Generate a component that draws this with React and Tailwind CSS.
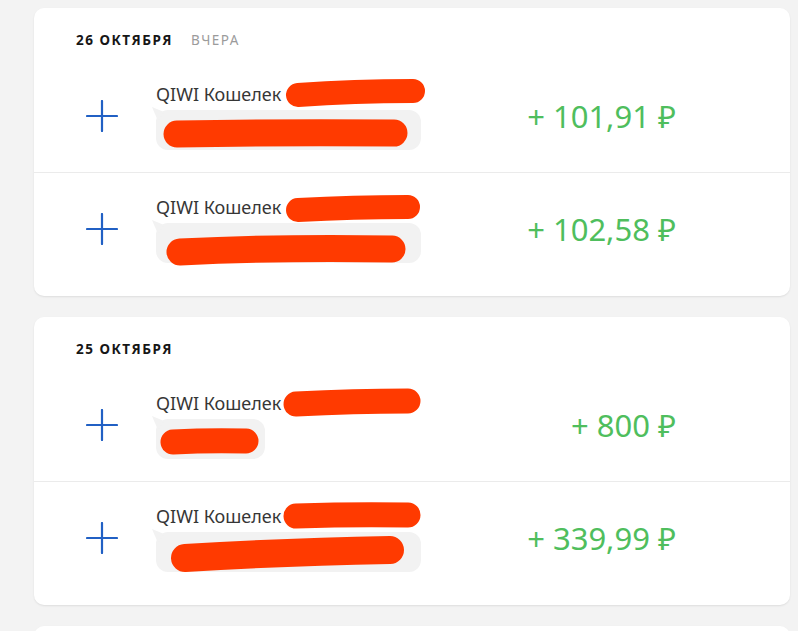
const rows1 = [
  {
    amount: '+ 101,91 ₽',
    bubbleW: 'w-[265px]',
    marks: [
      { d: 'M264 35 Q320 31 379 31', w: 24 },
      { d: 'M143 74 Q250 72 360 73', w: 27 },
    ],
  },
  {
    amount: '+ 102,58 ₽',
    bubbleW: 'w-[265px]',
    marks: [
      { d: 'M264 37 Q320 34 374 34', w: 24 },
      { d: 'M146 79 Q250 74 358 76', w: 27 },
    ],
  },
];

const rows2 = [
  {
    amount: '+ 800 ₽',
    bubbleW: 'w-[109px]',
    marks: [
      { d: 'M262 35 Q320 32 374 32', w: 25 },
      { d: 'M139 73 Q175 71 212 72', w: 25 },
    ],
  },
  {
    amount: '+ 339,99 ₽',
    bubbleW: 'w-[265px]',
    marks: [
      { d: 'M262 34 Q320 32 374 33', w: 25 },
      { d: 'M151 76 Q250 70 356 68', w: 28 },
    ],
  },
];

function PlusIcon() {
  return (
    <svg width="32" height="32" viewBox="0 0 32 32" className="shrink-0">
      <path d="M1 16H31M16 1V31" stroke="#2160c4" strokeWidth="2.2" strokeLinecap="round" />
    </svg>
  );
}

function Row({ amount, bubbleW, marks }) {
  return (
    <div className="relative flex h-[112px] items-center">
      <div className="w-[52px]" />
      <PlusIcon />
      <div className="ml-[38px] flex flex-col">
        <div className="text-[18px] leading-[22px] text-[#363636]">QIWI Кошелек</div>
        <div className={`relative mt-[5px] h-[40px] rounded-[12px] bg-[#f2f2f2] ${bubbleW}`}>
          <svg width="12" height="14" viewBox="0 0 12 14" className="absolute -left-[4px] -top-[3px]">
            <path d="M0 0 L12 5 L6 14 Z" fill="#f2f2f2" />
          </svg>
        </div>
      </div>
      <div className="ml-auto mr-[114px] text-[31px] leading-[36px] text-[#4fbe5d]">{amount}</div>
      <svg width="756" height="112" className="pointer-events-none absolute left-0 top-0">
        {marks.map((m, i) => (
          <path key={i} d={m.d} stroke="#ff3a00" strokeWidth={m.w} strokeLinecap="round" fill="none" />
        ))}
      </svg>
    </div>
  );
}

function DayCard({ date, note, rows }) {
  return (
    <div className="w-[756px] shrink-0 rounded-[10px] bg-white pb-[11px] shadow-[0_1px_2px_rgba(0,0,0,0.09)]">
      <div className="flex h-[52px] items-start pt-[24px] pl-[42px] text-[13.5px] leading-[16px] tracking-[0.11em]">
        <span className="font-bold text-[#161616]">{date}</span>
        {note && <span className="ml-[18px] text-[#9b9b9b]">{note}</span>}
      </div>
      {rows.map((r, i) => (
        <div key={i}>
          {i > 0 && <div className="h-px bg-[#ebebeb]" />}
          <Row {...r} />
        </div>
      ))}
    </div>
  );
}

export default function App() {
  return (
    <div
      className="flex h-[631px] flex-col gap-[21px] overflow-hidden bg-[#f3f3f3] pt-[8px] pl-[34px]"
      style={{ fontFamily: '"Noto Sans", "Open Sans", sans-serif' }}
    >
      <DayCard date="26 ОКТЯБРЯ" note="ВЧЕРА" rows={rows1} />
      <DayCard date="25 ОКТЯБРЯ" rows={rows2} />
      <div className="h-[40px] w-[756px] shrink-0 rounded-[10px] bg-white shadow-[0_1px_2px_rgba(0,0,0,0.09)]" />
    </div>
  );
}
